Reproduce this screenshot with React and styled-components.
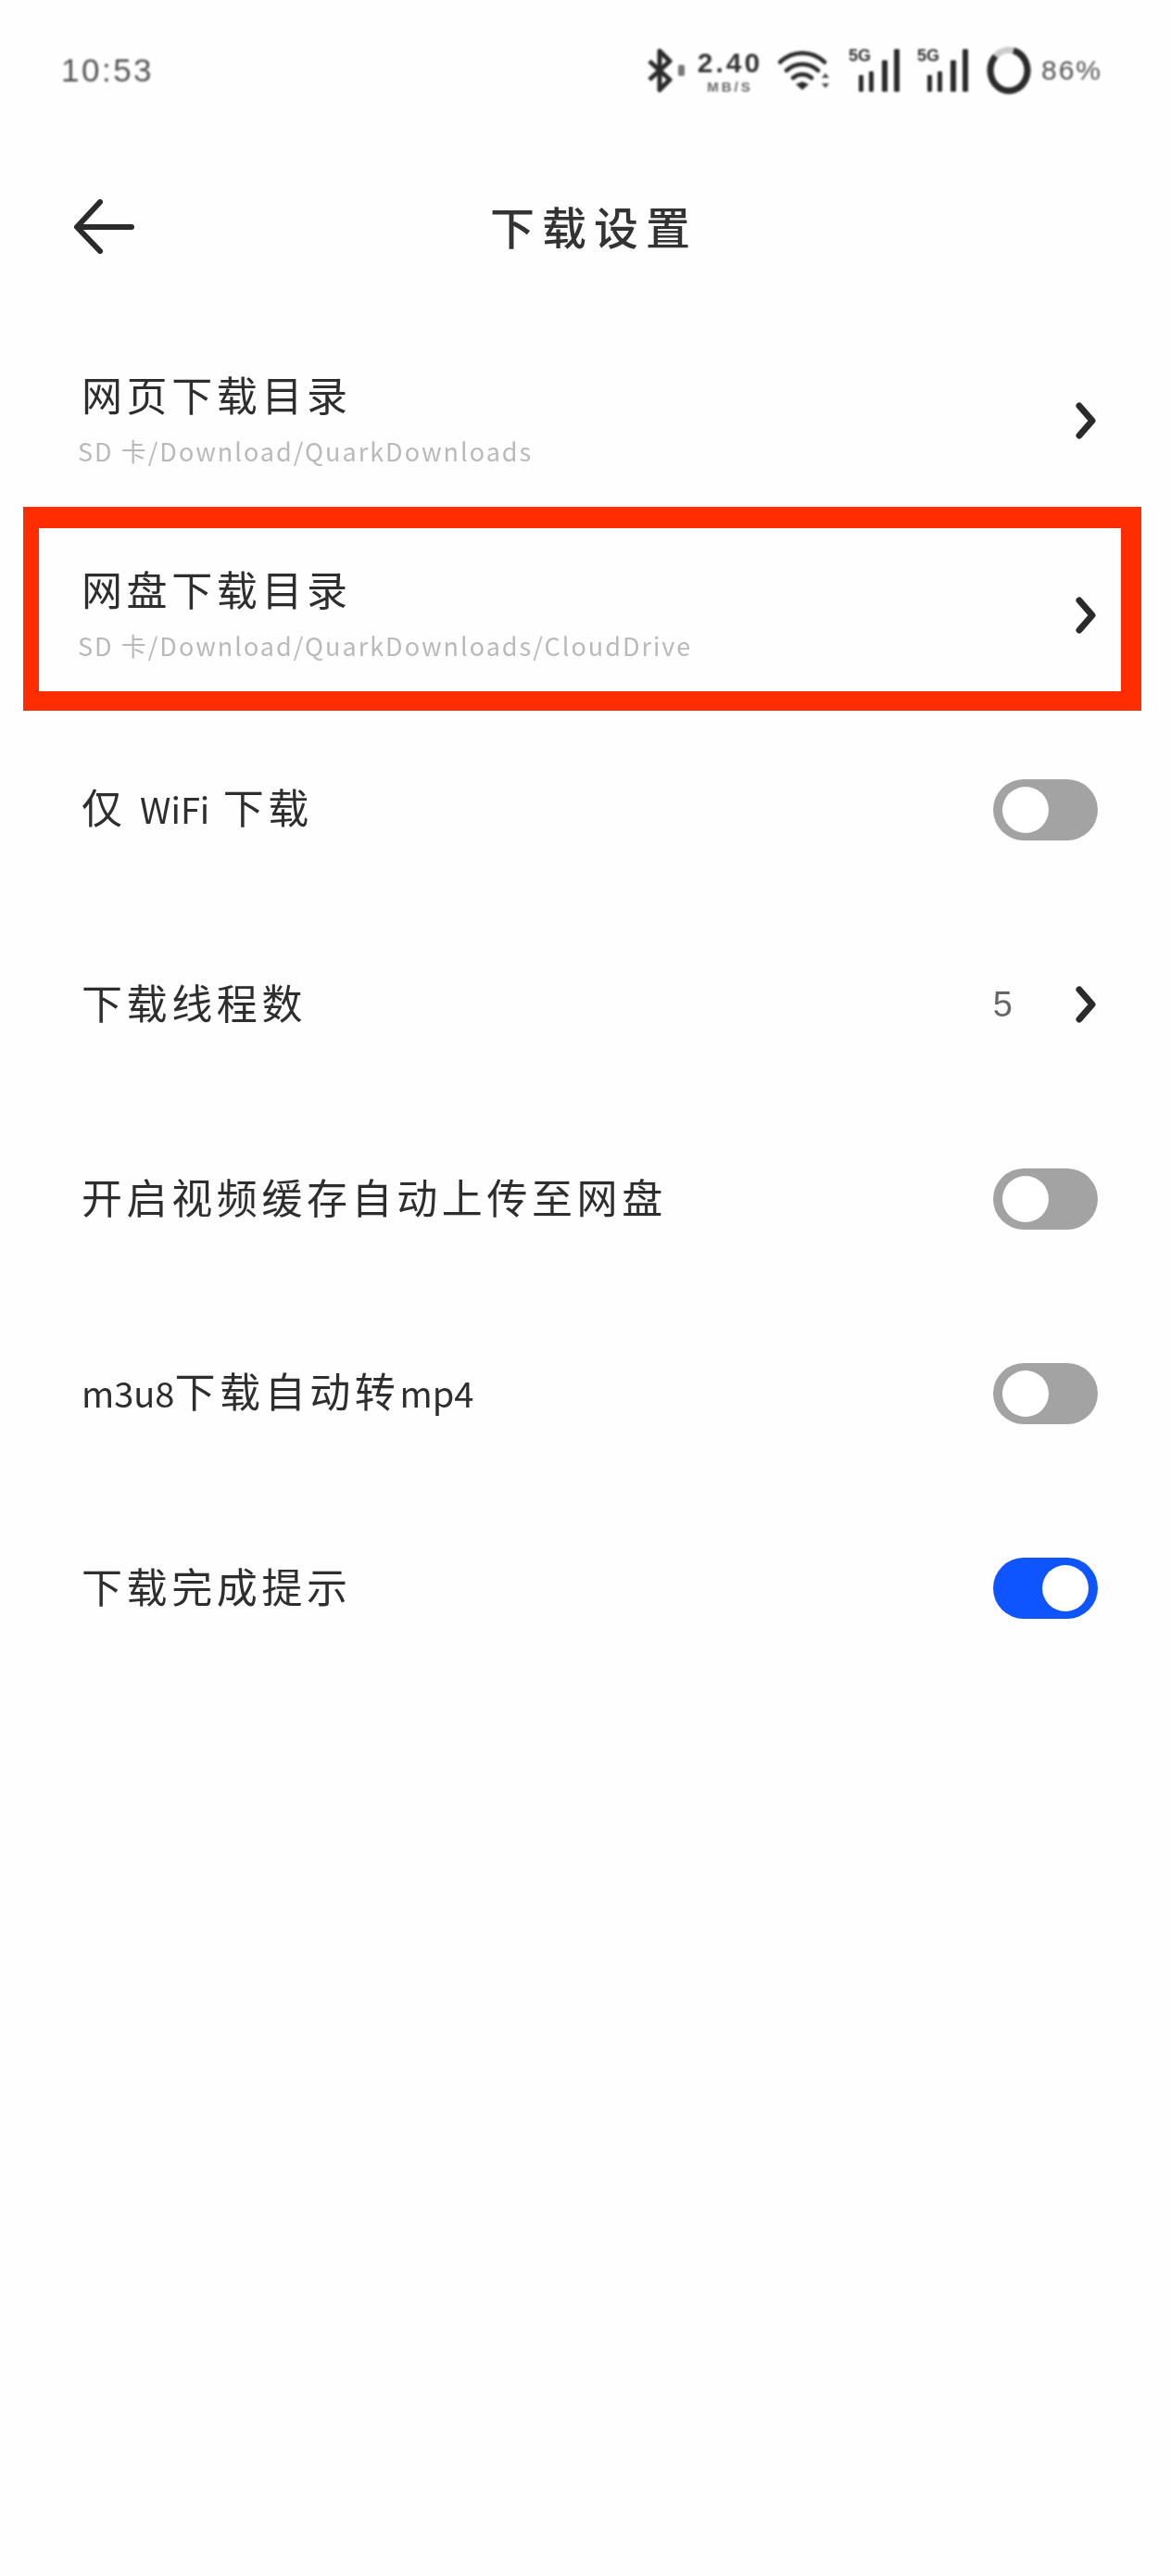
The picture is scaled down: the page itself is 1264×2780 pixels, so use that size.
import React from 'react';
import styled, { createGlobalStyle } from 'styled-components';

const Global = createGlobalStyle`
  html, body {
    margin: 0;
    padding: 0;
    background: #fff;
  }
`;

const cjk = `"Noto Sans CJK SC", "Noto Sans", sans-serif`;

const Page = styled.div`
  width: 1264px;
  height: 2780px;
  overflow: hidden;
  background: #fefefe;
  font-family: ${cjk};
  color: #2b2b2b;
`;

const StatusBar = styled.div`
  height: 152px;
  box-sizing: border-box;
  padding: 0 74px 0 66px;
  display: flex;
  align-items: center;
  justify-content: space-between;
  filter: blur(0.8px);
`;

const Clock = styled.span`
  font-family: "Liberation Sans", sans-serif;
  font-size: 35px;
  letter-spacing: 2.5px;
  color: #555;
`;

const Indicators = styled.div`
  display: flex;
  align-items: center;
`;

const Speed = styled.div`
  display: flex;
  flex-direction: column;
  align-items: center;
  width: 76px;
  margin: 0 14px 0 10px;
  font-family: "Liberation Sans", sans-serif;
  color: #333;
`;

const SpeedValue = styled.span`
  font-size: 30px;
  font-weight: 700;
  letter-spacing: 3px;
  line-height: 35px;
`;

const SpeedUnit = styled.span`
  font-size: 15px;
  font-weight: 700;
  letter-spacing: 3px;
  line-height: 18px;
  color: #666;
`;

const Signal = styled.div`
  position: relative;
  width: 56px;
  height: 46px;
  margin-left: ${p => p.$gap}px;
`;

const NetLabel = styled.span`
  position: absolute;
  left: 0;
  top: -2px;
  font-family: "Liberation Sans", sans-serif;
  font-size: 18px;
  font-weight: 700;
  line-height: 18px;
  color: #333;
`;

const Battery = styled.span`
  margin-left: 10px;
  font-family: "Liberation Sans", sans-serif;
  font-size: 30px;
  letter-spacing: 2px;
  color: #555;
`;

const NavBar = styled.div`
  position: relative;
  height: 188px;
  margin-bottom: 9px;
  display: flex;
  align-items: center;
  justify-content: center;
  padding-bottom: 6px;
  box-sizing: border-box;
`;

const BackIcon = styled.svg`
  position: absolute;
  left: 78px;
  top: 62px;
  filter: blur(0.6px);
`;

const PageTitle = styled.h1`
  margin: 0 0 0 18px;
  font-size: 48px;
  font-weight: 500;
  letter-spacing: 8px;
  line-height: 60px;
  color: #333;
  filter: blur(0.7px);
`;

const List = styled.div`
  display: flex;
  flex-direction: column;
`;

const Row = styled.div`
  position: relative;
  height: 210px;
  box-sizing: border-box;
  padding: 0 81px 0 88px;
  display: flex;
  align-items: center;
  justify-content: space-between;
`;

const Highlight = styled.div`
  position: absolute;
  left: 25px;
  right: 32px;
  top: -12px;
  height: 220px;
  box-sizing: border-box;
  border: solid #ff2d00;
  border-width: 23px 22px 21px 17px;
  pointer-events: none;
`;

const Labels = styled.div`
  display: flex;
  flex-direction: column;
  padding-bottom: 6px;
  filter: blur(0.7px);
`;

const Label = styled.span`
  font-size: 44px;
  letter-spacing: 4.6px;
  line-height: 60px;
  white-space: pre;
  color: #2e2e2e;
`;

const Latin = styled.span`
  font-size: 38px;
  letter-spacing: 0;
`;

const Path = styled.span`
  margin: 14px 0 2px -4px;
  font-size: 27px;
  line-height: 36px;
  letter-spacing: 2px;
  color: #b9b9b9;
`;

const Trailing = styled.div`
  display: flex;
  align-items: center;
`;

const Value = styled.span`
  margin-right: 68px;
  font-family: "Liberation Sans", sans-serif;
  font-size: 38px;
  color: #666;
  filter: blur(0.6px);
`;

const Chevron = styled.svg`
  display: block;
  filter: blur(0.5px);
`;

const Track = styled.div`
  width: 113px;
  height: 66px;
  margin-right: -2px;
  border-radius: 33px;
  background: ${p => (p.$on ? '#0f55ff' : '#a3a3a3')};
  display: flex;
  align-items: center;
  justify-content: ${p => (p.$on ? 'flex-end' : 'flex-start')};
  padding: 0 10px;
  box-sizing: border-box;
`;

const Knob = styled.div`
  width: 50px;
  height: 50px;
  border-radius: 50%;
  background: #fff;
`;

const rows = [
  { id: 'web', label: '网页下载目录', path: 'SD 卡/Download/QuarkDownloads', kind: 'link' },
  { id: 'cloud', label: '网盘下载目录', path: 'SD 卡/Download/QuarkDownloads/CloudDrive', kind: 'link', marked: true },
  { id: 'wifi', label: <>仅 <Latin>WiFi</Latin> 下载</>, kind: 'off' },
  { id: 'threads', label: '下载线程数', value: '5', kind: 'link' },
  { id: 'upload', label: '开启视频缓存自动上传至网盘', kind: 'off' },
  { id: 'm3u8', label: <><Latin>m3u8</Latin>下载自动转<Latin>mp4</Latin></>, kind: 'off' },
  { id: 'notify', label: '下载完成提示', kind: 'on' },
];

const Bluetooth = () => (
  <svg width="42" height="48" viewBox="0 0 42 48" fill="none">
    <path d="M3 14l22 20-11 11V3l11 11L3 34" stroke="#2b2b2b" strokeWidth="5" strokeLinejoin="round" />
    <rect x="34" y="18" width="7" height="12" rx="2" fill="#777" />
  </svg>
);

const Wifi = () => (
  <svg width="58" height="44" viewBox="0 0 58 44" fill="none">
    <path d="M2 13c14-13 34-13 48 0M9 22c10-9 24-9 34 0M16 30c6-5 14-5 20 0" stroke="#2b2b2b" strokeWidth="4.5" strokeLinecap="round" />
    <path d="M19 37l7-3 7 3-7 6z" fill="#2b2b2b" />
    <path d="M47 30l4-5 4 5zM47 36l4 5 4-5z" fill="#444" />
  </svg>
);

const Bars = () => (
  <svg width="56" height="46" viewBox="0 0 56 46" style={{ position: 'absolute', left: 0, top: 0 }}>
    <rect x="11" y="28" width="5" height="18" rx="1" fill="#2b2b2b" />
    <rect x="22" y="24" width="5" height="22" rx="1" fill="#2b2b2b" />
    <rect x="36" y="12" width="6" height="34" rx="1" fill="#2b2b2b" />
    <rect x="49" y="0" width="6" height="46" rx="1" fill="#2b2b2b" />
  </svg>
);

const Ring = () => (
  <svg width="50" height="54" viewBox="0 0 50 54" fill="none" style={{ marginLeft: 18 }}>
    <ellipse cx="25" cy="27" rx="20" ry="22" stroke="#ccc" strokeWidth="7" />
    <path d="M30 5.6A20 22 0 1 1 10.5 11.8" stroke="#2b2b2b" strokeWidth="7" />
  </svg>
);

const SettingRow = ({ label, path, value, kind, marked }) => (
  <Row>
    <Labels>
      <Label>{label}</Label>
      {path && <Path>{path}</Path>}
    </Labels>
    <Trailing>
      {value && <Value>{value}</Value>}
      {kind === 'link' ? (
        <Chevron width="22" height="40" viewBox="0 0 22 40" fill="none">
          <path d="M4 4l14 16L4 36" stroke="#2b2b2b" strokeWidth="7" strokeLinecap="round" strokeLinejoin="round" />
        </Chevron>
      ) : (
        <Track $on={kind === 'on'}>
          <Knob />
        </Track>
      )}
    </Trailing>
    {marked && <Highlight />}
  </Row>
);

const App = () => (
  <Page>
    <Global />
    <StatusBar>
      <Clock>10:53</Clock>
      <Indicators>
        <Bluetooth />
        <Speed>
          <SpeedValue>2.40</SpeedValue>
          <SpeedUnit>MB/S</SpeedUnit>
        </Speed>
        <Wifi />
        <Signal $gap={18}>
          <Bars />
          <NetLabel>5G</NetLabel>
        </Signal>
        <Signal $gap={18}>
          <Bars />
          <NetLabel>5G</NetLabel>
        </Signal>
        <Ring />
        <Battery>86%</Battery>
      </Indicators>
    </StatusBar>
    <NavBar>
      <BackIcon width="68" height="60" viewBox="0 0 68 60" fill="none">
        <path d="M30 4L5 31l25 26M6 31h58" stroke="#2b2b2b" strokeWidth="6" strokeLinecap="round" strokeLinejoin="round" />
      </BackIcon>
      <PageTitle>下载设置</PageTitle>
    </NavBar>
    <List>
      {rows.map(({ id, ...row }) => (
        <SettingRow key={id} {...row} />
      ))}
    </List>
  </Page>
);

export default App;
